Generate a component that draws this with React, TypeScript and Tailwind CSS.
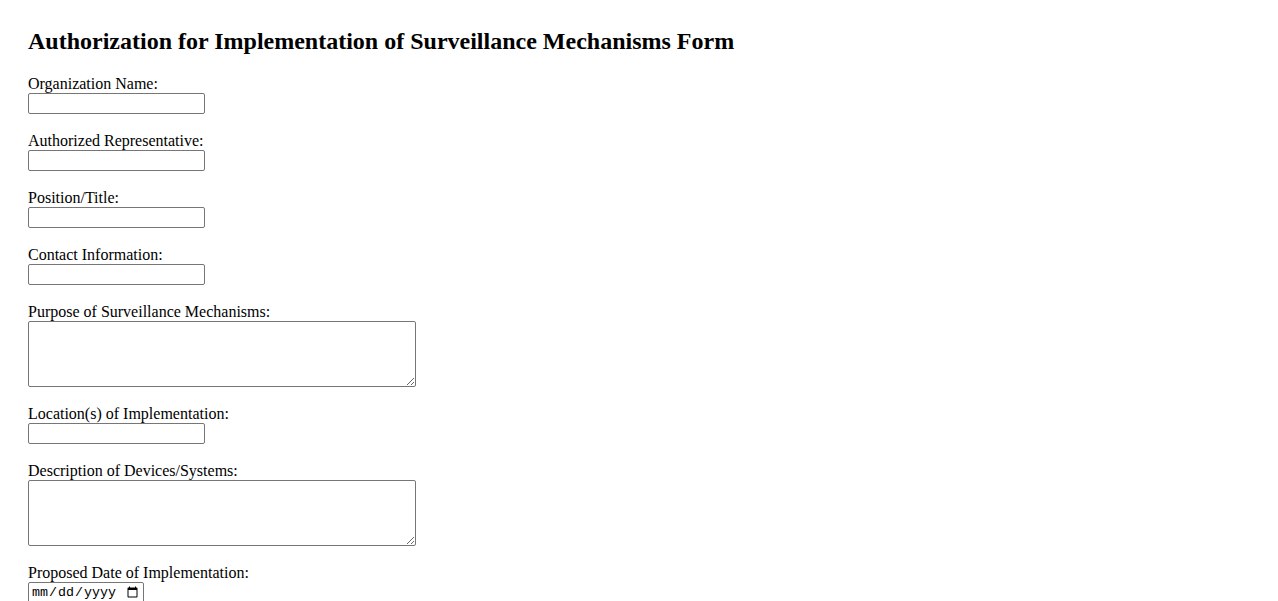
import React from "react";

const inputCls =
  "block w-[177px] h-[21px] border border-[#767676] rounded-[2px] bg-white px-[2px] text-[13.33px] outline-none";
const areaCls =
  "block w-[388px] h-[66px] border border-[#767676] rounded-[2px] bg-white px-[2px] text-[13.33px] outline-none";

function Field({ label, kind = "text" }: { label: string; kind?: "text" | "area" | "date" }) {
  return (
    <div className="mb-[18px]">
      <label className="block leading-[18px]">{label}</label>
      {kind === "text" && <input type="text" className={inputCls} />}
      {kind === "area" && <textarea className={areaCls} />}
      {kind === "date" && (
        <input
          type="date"
          className="block w-[116px] h-[21px] border border-[#767676] rounded-[2px] bg-white px-[2px] text-[13.33px] outline-none [font-family:'Liberation_Mono',monospace]"
        />
      )}
    </div>
  );
}

export default function App() {
  return (
    <div className="min-h-[601px] bg-white text-black px-[28px] pt-[27px] text-[16px] [font-family:'Liberation_Serif','Times_New_Roman',serif]">
      <h2 className="text-[24px] font-bold leading-[28px] mb-[20px]">
        Authorization for Implementation of Surveillance Mechanisms Form
      </h2>
      <form>
        <Field label="Organization Name:" />
        <Field label="Authorized Representative:" />
        <Field label="Position/Title:" />
        <Field label="Contact Information:" />
        <Field label="Purpose of Surveillance Mechanisms:" kind="area" />
        <Field label="Location(s) of Implementation:" />
        <Field label="Description of Devices/Systems:" kind="area" />
        <Field label="Proposed Date of Implementation:" kind="date" />
      </form>
    </div>
  );
}
